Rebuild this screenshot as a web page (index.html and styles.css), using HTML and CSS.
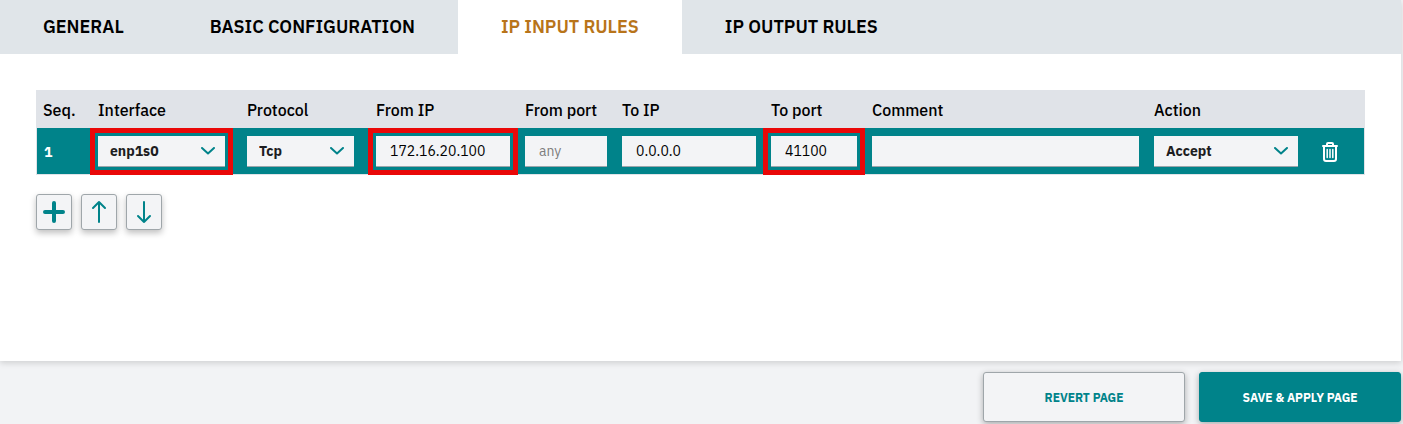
FILE: index.html
```
<!DOCTYPE html>
<html lang="en">
<head>
    <meta charset="UTF-8">
    <meta name="viewport" content="width=device-width, initial-scale=1.0">
    <title>IP input rules</title>
    <link rel="stylesheet" href="styles.css">
</head>
<body>
    <main class="panel">
        <nav class="tabs">
            <button type="button" class="tab">GENERAL</button>
            <button type="button" class="tab">BASIC CONFIGURATION</button>
            <button type="button" class="tab active">IP INPUT RULES</button>
            <button type="button" class="tab">IP OUTPUT RULES</button>
        </nav>

        <div class="content">
            <table class="rules">
                <colgroup>
                    <col class="col-seq">
                    <col class="col-interface">
                    <col class="col-protocol">
                    <col class="col-ip">
                    <col class="col-from-port">
                    <col class="col-ip">
                    <col class="col-to-port">
                    <col>
                    <col class="col-action">
                    <col class="col-delete">
                </colgroup>
                <thead>
                    <tr>
                        <th>Seq.</th>
                        <th id="h-interface">Interface</th>
                        <th id="h-protocol">Protocol</th>
                        <th id="h-from-ip">From IP</th>
                        <th id="h-from-port">From port</th>
                        <th id="h-to-ip">To IP</th>
                        <th id="h-to-port">To port</th>
                        <th id="h-comment">Comment</th>
                        <th id="h-action">Action</th>
                        <td></td>
                    </tr>
                </thead>
                <tbody>
                    <tr>
                        <td class="seq">1</td>
                        <td>
                            <div class="select short highlight">
                                <select aria-labelledby="h-interface">
                                    <option>enp1s0</option>
                                </select>
                                <svg class="chevron" viewBox="0 0 14 8"><path d="M1 1l6 5.5L13 1"/></svg>
                            </div>
                        </td>
                        <td>
                            <div class="select short">
                                <select aria-labelledby="h-protocol">
                                    <option>Tcp</option>
                                    <option>Udp</option>
                                </select>
                                <svg class="chevron" viewBox="0 0 14 8"><path d="M1 1l6 5.5L13 1"/></svg>
                            </div>
                        </td>
                        <td><input type="text" class="field highlight" aria-labelledby="h-from-ip" value="172.16.20.100"></td>
                        <td><input type="text" class="field" aria-labelledby="h-from-port" placeholder="any"></td>
                        <td><input type="text" class="field" aria-labelledby="h-to-ip" value="0.0.0.0"></td>
                        <td><input type="text" class="field highlight" aria-labelledby="h-to-port" value="41100"></td>
                        <td><input type="text" class="field" aria-labelledby="h-comment"></td>
                        <td>
                            <div class="select">
                                <select aria-labelledby="h-action">
                                    <option>Accept</option>
                                    <option>Drop</option>
                                </select>
                                <svg class="chevron" viewBox="0 0 14 8"><path d="M1 1l6 5.5L13 1"/></svg>
                            </div>
                        </td>
                        <td>
                            <button type="button" class="delete" aria-label="Delete rule">
                                <svg width="16" height="20" viewBox="0 0 16 20">
                                    <path class="bin" d="M5 3.5V2q0-1 1-1h4q1 0 1 1v1.5M1 4h14M2 4v13q0 2 2 2h8q2 0 2-2V4"/>
                                    <path class="lines" d="M5.200 7.500v8M8 7.500v8M10.800 7.500v8"/>
                                </svg>
                            </button>
                        </td>
                    </tr>
                </tbody>
            </table>

            <div class="tools">
                <button type="button" class="tool" aria-label="Add rule">
                    <svg width="24" height="24" viewBox="0 0 24 24"><path class="plus" d="M12 3v18M3 12h18"/></svg>
                </button>
                <button type="button" class="tool" aria-label="Move up">
                    <svg width="24" height="24" viewBox="0 0 24 24"><path d="M12 22V2M6 8l6-6 6 6"/></svg>
                </button>
                <button type="button" class="tool" aria-label="Move down">
                    <svg width="24" height="24" viewBox="0 0 24 24"><path d="M12 2v20M6 16l6 6 6-6"/></svg>
                </button>
            </div>
        </div>
    </main>

    <footer class="actions">
        <button type="button" class="btn">REVERT PAGE</button>
        <button type="button" class="btn primary">SAVE &amp; APPLY PAGE</button>
    </footer>
</body>
</html>
```
FILE: styles.css
```
*{
    margin: 0;
    padding: 0;
    box-sizing: border-box;
}
body{
    background-color: #f2f3f5;
    font-family: "IBM Plex Sans", "Noto Sans", sans-serif;
    font-size: 14px;
    color: #000;
    min-height: 100vh;
    overflow: hidden;
}
button, input, select{
    font-family: inherit;
}
button{
    cursor: pointer;
}
svg{
    display: block;
    fill: none;
    stroke: #00838a;
    stroke-width: 2;
    stroke-linecap: round;
    stroke-linejoin: round;
}

.panel{
    margin-right: 2px;
    background-color: #fff;
    box-shadow: 0 2px 6px rgba(0, 0, 0, 0.15);
}

/* tabs */
.tabs{
    display: flex;
    height: 54px;
    background-color: #e0e5e9;
}
.tab{
    padding: 0 43px 2px;
    border: none;
    background: none;
    font-size: 18px;
    font-weight: 600;
    color: #000;
}
.tab.active{
    background-color: #fff;
    color: #b8741a;
}

.content{
    min-height: 307px;
    padding: 36px;
}

/* rules table */
.rules{
    width: 100%;
    table-layout: fixed;
    border-spacing: 0;
}
.rules thead{
    background-color: #e0e3e8;
}
.rules th{
    height: 38px;
    padding: 2px 0 0 7px;
    font-size: 16px;
    font-weight: 500;
    text-align: left;
    white-space: nowrap;
}
.rules tbody{
    background-color: #00838a;
}
.rules tbody td{
    padding: 8px 8px 7px 7px;
    border-bottom: 1px solid #e0e3e8;
}
.rules tbody td:first-child{
    border-left: 1px solid #e0e3e8;
}
.rules tbody td:last-child{
    border-right: 1px solid #e0e3e8;
}
.rules .seq{
    font-weight: 700;
    color: #fff;
}
.col-seq{ width: 55px; }
.col-interface{ width: 149px; }
.col-protocol{ width: 129px; }
.col-ip{ width: 149px; }
.col-from-port{ width: 97px; }
.col-to-port{ width: 101px; }
.col-action{ width: 159px; }
.col-delete{ width: 59px; }

.field, .select select{
    display: block;
    width: 100%;
    height: 31px;
    border: none;
    border-bottom: 1px solid #9aa5ab;
    border-radius: 0;
    background-color: #f3f4f6;
    font-size: 14px;
}
.field{
    padding: 0 14px;
    color: #000;
}
.field::placeholder{
    color: #7d7d7d;
}
.select{
    position: relative;
}
.select.short{
    margin-right: 7px;
}
.select select{
    appearance: none;
    padding: 0 30px 0 12px;
    font-weight: 700;
    color: #1d1d1f;
}
.chevron{
    position: absolute;
    top: 11px;
    right: 10px;
    width: 14px;
    height: 8px;
    pointer-events: none;
}
.highlight{
    outline: 5px solid #e90808;
    outline-offset: 3px;
}

.delete{
    display: block;
    margin-left: 9px;
    border: none;
    background: none;
}
.delete svg{
    stroke: #fff;
}
.delete .lines{
    stroke-width: 1.500;
}

/* buttons under the table */
.tools{
    display: flex;
    gap: 9px;
    margin-top: 19px;
}
.tool{
    display: flex;
    align-items: center;
    justify-content: center;
    width: 36px;
    height: 36px;
    border: 1px solid #9fa6aa;
    border-radius: 3px;
    background-color: #f3f4f6;
    box-shadow: 0 3px 6px rgba(0, 0, 0, 0.25);
}
.tool .plus{
    stroke-width: 4;
}

/* page buttons */
.actions{
    display: flex;
    justify-content: flex-end;
    gap: 14px;
    padding: 11px 2px 0 0;
}
.btn{
    width: 202px;
    height: 50px;
    border: 1px solid #9fa6aa;
    border-radius: 3px;
    background-color: #f3f4f6;
    box-shadow: 0 2px 6px rgba(0, 0, 0, 0.3);
    font-size: 12px;
    font-weight: 700;
    color: #00838a;
}
.btn.primary{
    border-color: #00838a;
    background-color: #00838a;
    color: #fff;
}
```
